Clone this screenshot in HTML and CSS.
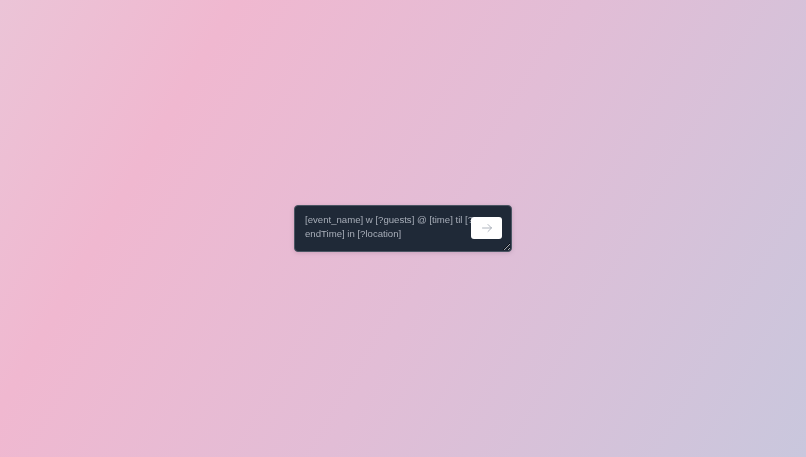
FILE: index.html
```html
<!DOCTYPE html>
<html>
<head>
<meta charset="utf-8">
<link rel="stylesheet" href="styles.css">
</head>
<body>
<div class="page">
  <form class="composer">
    <textarea class="input" placeholder="[event_name] w [?guests] @ [time] til [?endTime] in [?location]"></textarea>
    <button type="button" class="send" aria-label="Submit">
      <svg width="12" height="12" viewBox="0 0 24 24" fill="none" stroke="currentColor" stroke-width="1.6" stroke-linecap="round" stroke-linejoin="round"><path d="M3 12h18M14 5l7 7-7 7"/></svg>
    </button>
  </form>
</div>
</body>
</html>
```
FILE: styles.css
```css
html, body {
  margin: 0;
  padding: 0;
  height: 100%;
}
body {
  font-family: "Liberation Sans", Arial, Helvetica, sans-serif;
  background: linear-gradient(120deg, #ebc4d7 0%, #f0b8d0 22%, #e2bdd6 55%, #c9c7dd 100%);
}
.page {
  height: 100%;
  display: flex;
  align-items: center;
  justify-content: center;
}
.composer {
  position: relative;
  margin: 0;
  filter: drop-shadow(0 1px 2px rgba(80, 40, 70, 0.18));
}
.input {
  display: block;
  box-sizing: border-box;
  width: 218px;
  height: 47px;
  margin: 0;
  padding: 7px 10px 8px;
  background: #1f2937;
  border: 1px solid #4b5563;
  border-radius: 4px;
  color: #d1d5db;
  font-family: inherit;
  font-size: 9.6px;
  line-height: 13.5px;
  outline: none;
}
.input::placeholder {
  color: #a8aeb9;
  opacity: 1;
}
.send {
  position: absolute;
  top: 12px;
  right: 10px;
  width: 31px;
  height: 22px;
  padding: 0;
  border: none;
  border-radius: 3px;
  background: #ffffff;
  color: #9ca3af;
  display: flex;
  align-items: center;
  justify-content: center;
  cursor: pointer;
}
```
